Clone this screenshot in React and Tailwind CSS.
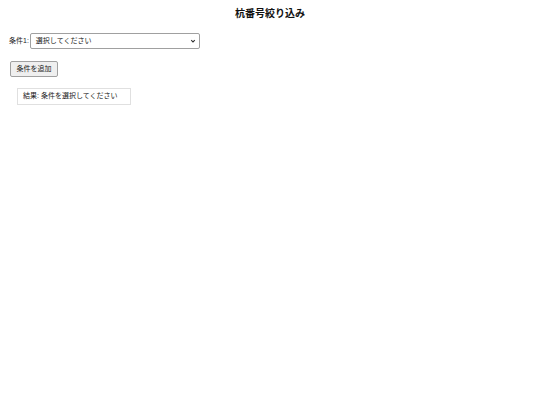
export default function App() {
  return (
    <div
      className="w-[540px] h-[405px] bg-white text-black"
      style={{ fontFamily: '"Liberation Sans", "Noto Sans CJK JP", sans-serif' }}
    >
      <h1 className="pt-[8px] text-center text-[10px] leading-[12px] font-bold text-[#111]">杭番号絞り込み</h1>
      <div className="mt-[13px] ml-[9px] flex items-center gap-[1px]">
        <span className="text-[7px] leading-[10px] text-[#222]">条件1:</span>
        <div className="w-[170px] h-[16px] border border-[#a0a0a0] rounded-[2px] flex items-center justify-between pl-[5px] pr-[3px] text-[7px] text-[#222]">
          <span>選択してください</span>
          <svg width="6" height="6" viewBox="0 0 10 10">
            <path d="M2 3.5 L5 6.5 L8 3.5" fill="none" stroke="#333" strokeWidth="1.8" />
          </svg>
        </div>
      </div>
      <div className="mt-[12px] ml-[10px]">
        <div className="w-[48px] h-[16px] border border-[#a0a0a0] bg-[#efefef] rounded-[2px] flex items-center justify-center text-[7px] text-[#222]">
          条件を追加
        </div>
      </div>
      <div className="mt-[11px] ml-[17px]">
        <div className="w-[114px] h-[17px] border border-[#e0e0e0] flex items-center pl-[5px] text-[7px] text-[#222]">
          結果: 条件を選択してください
        </div>
      </div>
    </div>
  );
}
